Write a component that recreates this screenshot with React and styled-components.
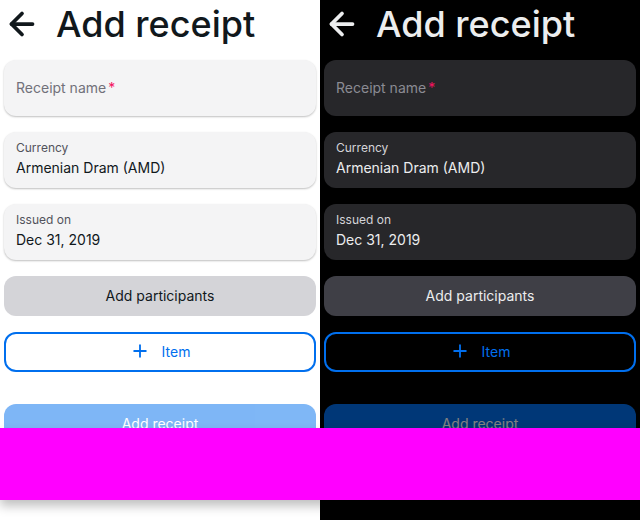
import React from "react";
import styled, { createGlobalStyle, ThemeProvider } from "styled-components";
import { ArrowLeft, Plus } from "lucide-react";

const GlobalStyle = createGlobalStyle`
  html, body { margin: 0; padding: 0; }
  body { font-family: Inter, "Noto Sans", sans-serif; }
  * { box-sizing: border-box; }
`;

const light = {
  bg: "#ffffff",
  fg: "#11181c",
  fieldBg: "#f4f4f5",
  fieldShadow: "0 1px 2px 0 rgba(0,0,0,0.25)",
  placeholder: "#71717a",
  label: "#52525b",
  neutralBg: "#d4d4d8",
  neutralFg: "#11181c",
};

const dark = {
  bg: "#000000",
  fg: "#ecedee",
  fieldBg: "#27272a",
  fieldShadow: "none",
  placeholder: "#8b8b93",
  label: "#d4d4d8",
  neutralBg: "#3f3f46",
  neutralFg: "#ecedee",
};

const Stage = styled.div`
  position: relative;
  width: 640px;
  height: 520px;
  display: grid;
  grid-template-columns: 320px 320px;
  overflow: hidden;
`;

const Panel = styled.div`
  background: ${(p) => p.theme.bg};
  color: ${(p) => p.theme.fg};
  padding: 0 4px;
  display: flex;
  flex-direction: column;
`;

const Header = styled.div`
  height: 48px;
  display: flex;
  align-items: center;
  gap: 16px;
  margin-bottom: 12px;
`;

const BackIcon = styled(ArrowLeft)`
  color: ${(p) => p.theme.fg};
  flex: none;
`;

const Title = styled.h1`
  margin: 0;
  font-size: 36px;
  font-weight: 500;
  line-height: 48px;
  letter-spacing: 0;
`;

const Form = styled.div`
  display: flex;
  flex-direction: column;
  gap: 16px;
`;

const Field = styled.div`
  height: 56px;
  border-radius: 12px;
  background: ${(p) => p.theme.fieldBg};
  box-shadow: ${(p) => p.theme.fieldShadow};
  padding: 0 12px ${(p) => (p.$filled ? "2px" : "0")};
  display: flex;
  flex-direction: column;
  justify-content: center;
`;

const Placeholder = styled.span`
  font-size: 14px;
  color: ${(p) => p.theme.placeholder};
  line-height: 20px;
`;

const Required = styled.span`
  color: #f31260;
  margin-left: 2px;
`;

const Label = styled.span`
  font-size: 12px;
  line-height: 16px;
  color: ${(p) => p.theme.label};
`;

const Value = styled.span`
  font-size: 14px;
  line-height: 20px;
  margin-top: 2px;
  color: ${(p) => p.theme.fg};
`;

const Button = styled.div`
  height: 40px;
  border-radius: 12px;
  display: flex;
  align-items: center;
  justify-content: center;
  gap: 12px;
  font-size: 14px;
  padding-bottom: 2px;
  ${(p) =>
    p.$variant === "neutral" &&
    `background: ${p.theme.neutralBg}; color: ${p.theme.neutralFg};`}
  ${(p) =>
    p.$variant === "outline" &&
    `border: 2px solid #006fee; color: #006fee; background: transparent;`}
  ${(p) =>
    p.$variant === "primary" &&
    `background: #006fee; color: #ffffff; opacity: 0.5; margin-top: 16px;`}
`;

const Overlay = styled.div`
  position: absolute;
  left: 0;
  right: 0;
  top: 428px;
  height: 72px;
  background: #ff00ff;
  box-shadow: 0 6px 10px rgba(0, 0, 0, 0.25);
`;

function Screen({ theme }) {
  return (
    <ThemeProvider theme={theme}>
      <Panel>
        <Header>
          <BackIcon size={36} strokeWidth={2.5} />
          <Title>Add receipt</Title>
        </Header>
        <Form>
          <Field>
            <Placeholder>
              Receipt name<Required>*</Required>
            </Placeholder>
          </Field>
          <Field $filled>
            <Label>Currency</Label>
            <Value>Armenian Dram (AMD)</Value>
          </Field>
          <Field $filled>
            <Label>Issued on</Label>
            <Value>Dec 31, 2019</Value>
          </Field>
          <Button $variant="neutral">Add participants</Button>
          <Button $variant="outline">
            <Plus size={20} strokeWidth={2.2} />
            Item
          </Button>
          <Button $variant="primary">Add receipt</Button>
        </Form>
      </Panel>
    </ThemeProvider>
  );
}

export default function App() {
  return (
    <>
      <GlobalStyle />
      <Stage>
        <Screen theme={light} />
        <Screen theme={dark} />
        <Overlay />
      </Stage>
    </>
  );
}
